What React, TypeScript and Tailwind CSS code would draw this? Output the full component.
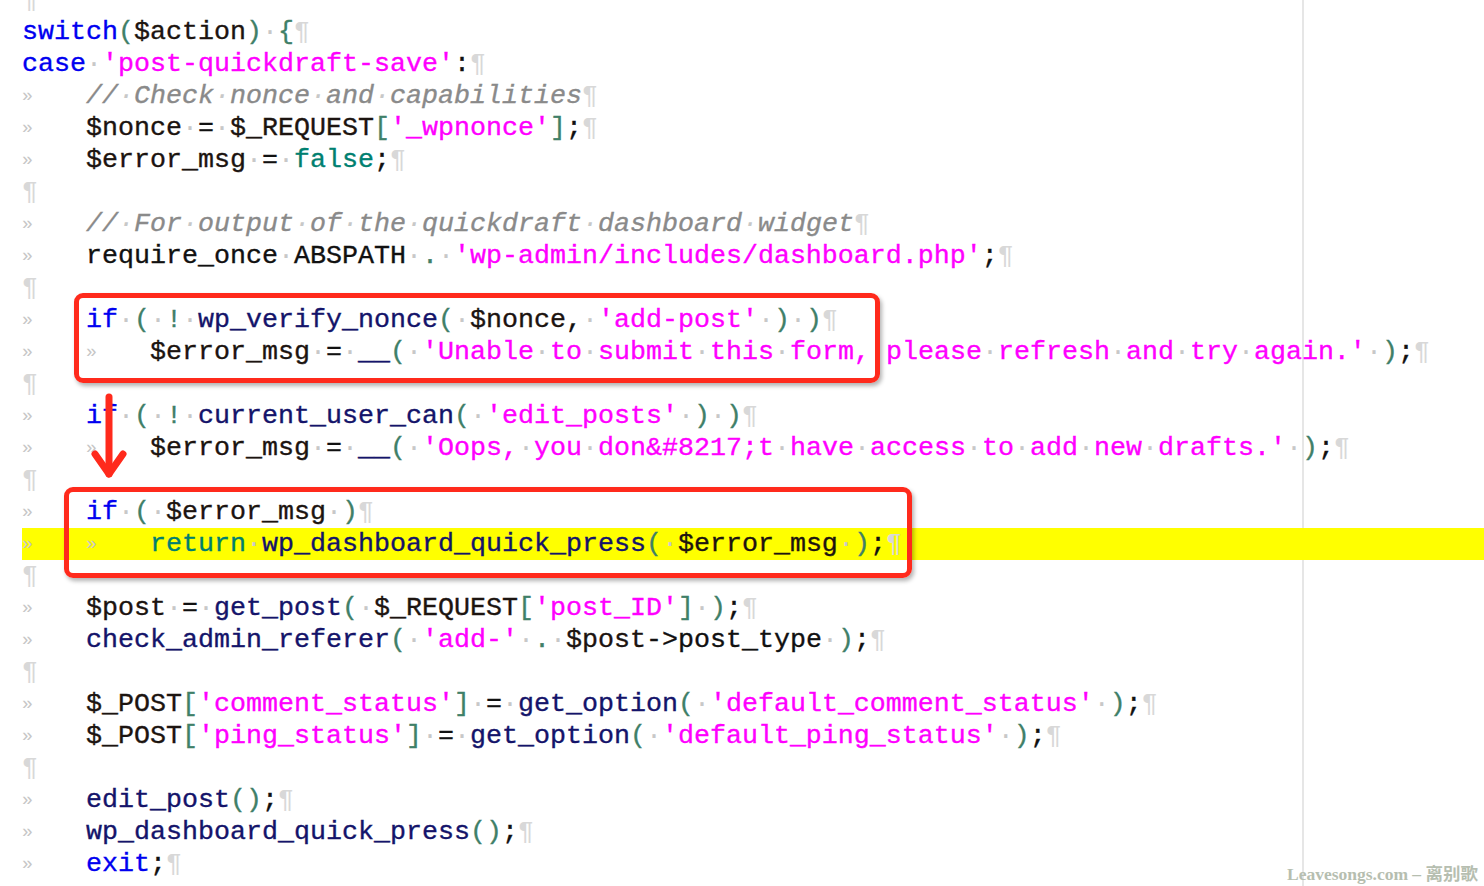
import React from "react";

// source lines, tabs kept as \t so they can be drawn as » markers
const code: string[] = [
  "",
  "switch($action) {",
  "case 'post-quickdraft-save':",
  "\t// Check nonce and capabilities",
  "\t$nonce = $_REQUEST['_wpnonce'];",
  "\t$error_msg = false;",
  "",
  "\t// For output of the quickdraft dashboard widget",
  "\trequire_once ABSPATH . 'wp-admin/includes/dashboard.php';",
  "",
  "\tif ( ! wp_verify_nonce( $nonce, 'add-post' ) )",
  "\t\t$error_msg = __( 'Unable to submit this form, please refresh and try again.' );",
  "",
  "\tif ( ! current_user_can( 'edit_posts' ) )",
  "\t\t$error_msg = __( 'Oops, you don&#8217;t have access to add new drafts.' );",
  "",
  "\tif ( $error_msg )",
  "\t\treturn wp_dashboard_quick_press( $error_msg );",
  "",
  "\t$post = get_post( $_REQUEST['post_ID'] );",
  "\tcheck_admin_referer( 'add-' . $post->post_type );",
  "",
  "\t$_POST['comment_status'] = get_option( 'default_comment_status' );",
  "\t$_POST['ping_status'] = get_option( 'default_ping_status' );",
  "",
  "\tedit_post();",
  "\twp_dashboard_quick_press();",
  "\texit;",
];

const HIGHLIGHT = 17;

type Kind = "kw" | "teal" | "str" | "cmt" | "var" | "fn" | "op" | "plain" | "sp" | "tab";
type Tok = { t: string; k: Kind };

const colors: Record<Kind, string> = {
  kw: "text-[#0000f0]",
  teal: "text-[#008070]",
  str: "text-[#ff00ff]",
  cmt: "text-[#8a8a8a] italic",
  var: "text-[#1c1410]",
  fn: "text-[#14146a]",
  op: "text-[#3f8068]",
  plain: "text-[#111111]",
  sp: "text-[#c4c4c4]",
  tab: "text-[#c8c8c8]",
};

function tokenize(line: string): Tok[] {
  const out: Tok[] = [];
  let i = 0;
  while (i < line.length) {
    const rest = line.slice(i);
    let m: RegExpMatchArray | null;
    if (rest.startsWith("//")) {
      out.push({ t: rest, k: "cmt" });
      break;
    }
    if ((m = rest.match(/^'[^']*'/))) {
      out.push({ t: m[0], k: "str" });
    } else if ((m = rest.match(/^\$\w+/))) {
      out.push({ t: m[0], k: "var" });
    } else if ((m = rest.match(/^\w+/))) {
      const w = m[0];
      const after = line.slice(i + w.length).trimStart();
      let k: Kind = "plain";
      if (["switch", "case", "if", "exit"].includes(w)) k = "kw";
      else if (["false", "return"].includes(w)) k = "teal";
      else if (after.startsWith("(")) k = "fn";
      out.push({ t: w, k });
    } else if (rest[0] === " ") {
      m = [" "];
      out.push({ t: " ", k: "sp" });
    } else if (rest[0] === "\t") {
      m = ["\t"];
      out.push({ t: "\t", k: "tab" });
    } else {
      m = [rest[0]];
      out.push({ t: rest[0], k: "()[]!.{}".includes(rest[0]) ? "op" : "plain" });
    }
    i += m[0].length;
  }
  return out;
}

function Token({ tok }: { tok: Tok }) {
  if (tok.k === "tab") {
    return (
      <span className="inline-block w-[64px] text-[18px] not-italic text-[#c6c6c6] [-webkit-text-stroke:0px]">
        »
      </span>
    );
  }
  if (tok.k === "sp") {
    return <span className="text-[#c8c8c8] [-webkit-text-stroke:0px]">·</span>;
  }
  // strings and comments keep their own colour but show dotted spaces
  const parts = tok.t.split(/( )/);
  return (
    <span className={colors[tok.k]}>
      {parts.map((p, i) =>
        p === " " ? (
          <span key={i} className="text-[#c8c8c8] [-webkit-text-stroke:0px]">
            ·
          </span>
        ) : (
          <React.Fragment key={i}>{p}</React.Fragment>
        ),
      )}
    </span>
  );
}

function CodeLine({ line, active }: { line: string; active: boolean }) {
  return (
    <div
      className={`flex h-8 items-center whitespace-pre leading-8 ${active ? "bg-[#ffff00]" : ""}`}
    >
      {tokenize(line).map((tok, i) => (
        <Token key={i} tok={tok} />
      ))}
      <span className="text-[#d8d8d8] [-webkit-text-stroke:0px]">¶</span>
    </div>
  );
}

export default function App() {
  return (
    <div className="relative h-[886px] w-full overflow-hidden bg-white">
      {/* edge guide at column 80 */}
      <div className="absolute left-[1302px] top-0 h-full w-[2px] bg-[#e6e6e6]" />

      <div
        className="relative -mt-4 pl-[22px] text-[26.667px] text-[#111] [-webkit-text-stroke:0.35px_currentColor]"
        style={{ fontFamily: '"Liberation Mono", "Courier New", monospace' }}
      >
        {code.map((line, i) => (
          <CodeLine key={i} line={line} active={i === HIGHLIGHT} />
        ))}
      </div>

      {/* annotations */}
      <div className="absolute left-[74px] top-[293px] h-[90px] w-[806px] rounded-[9px] border-[5px] border-[#ff2a1c] shadow-[2px_3px_4px_rgba(0,0,0,0.3)]" />
      <div className="absolute left-[64px] top-[487px] h-[91px] w-[848px] rounded-[9px] border-[5px] border-[#ff2a1c] shadow-[2px_3px_4px_rgba(0,0,0,0.3)]" />
      <svg className="absolute left-[88px] top-[392px]" width="44" height="92" viewBox="0 0 44 92">
        <g stroke="#ff2a1c" strokeWidth="7" strokeLinecap="round" strokeLinejoin="round" fill="none">
          <line x1="21" y1="5" x2="21" y2="82" />
          <polyline points="7,62 21,82 35,62" />
        </g>
      </svg>

      <div
        className="absolute bottom-[-1px] right-[6px] text-[17.5px] font-bold text-[#b6beb0]"
        style={{ fontFamily: '"Liberation Serif", "Noto Sans CJK SC", serif' }}
      >
        Leavesongs.com – 离别歌
      </div>
    </div>
  );
}
